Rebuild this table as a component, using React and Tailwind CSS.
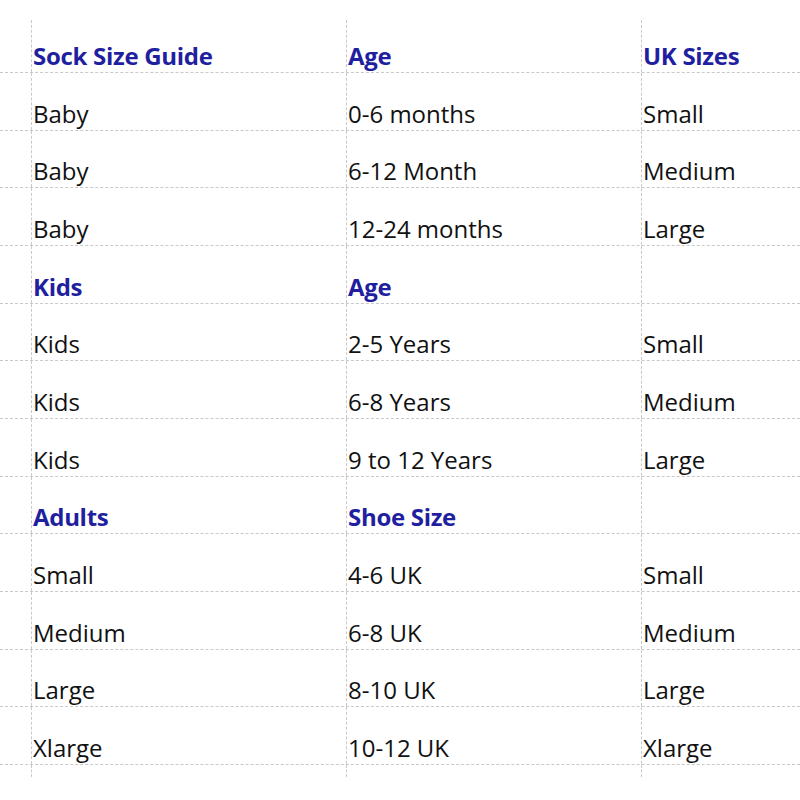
const rows = [
  { cells: ['Sock Size Guide', 'Age', 'UK Sizes'], head: true },
  { cells: ['Baby', '0-6 months', 'Small'] },
  { cells: ['Baby', '6-12 Month', 'Medium'] },
  { cells: ['Baby', '12-24 months', 'Large'] },
  { cells: ['Kids', 'Age', ''], head: true },
  { cells: ['Kids', '2-5 Years', 'Small'] },
  { cells: ['Kids', '6-8 Years', 'Medium'] },
  { cells: ['Kids', '9 to 12 Years', 'Large'] },
  { cells: ['Adults', 'Shoe Size', ''], head: true },
  { cells: ['Small', '4-6 UK', 'Small'] },
  { cells: ['Medium', '6-8 UK', 'Medium'] },
  { cells: ['Large', '8-10 UK', 'Large'] },
  { cells: ['Xlarge', '10-12 UK', 'Xlarge'] },
]

const cols = 'grid grid-cols-[31px_315px_295px_1fr]'
const vline = 'border-l border-dashed border-[#c9c9c9]'

export default function App() {
  return (
    <div className="w-[800px] h-[800px] bg-white overflow-hidden pt-[20px] font-['Open_Sans',sans-serif] text-[24px] text-[#111111]">
      {rows.map((row, i) => (
        <div
          key={i}
          className={`${cols} border-b border-dashed border-[#c9c9c9] ${i === 0 ? 'h-[53px]' : 'h-[57.67px]'}`}
        >
          <div />
          {row.cells.map((text, j) => (
            <div key={j} className={`${vline} flex items-end pl-[1px] pb-[4px]`}>
              <span
                className={`leading-none ${row.head ? 'font-bold text-[#1f1f9f] tracking-[-0.3px]' : ''}`}
              >
                {text}
              </span>
            </div>
          ))}
        </div>
      ))}
      <div className={`${cols} h-[12px]`}>
        <div />
        <div className={vline} />
        <div className={vline} />
        <div className={vline} />
      </div>
    </div>
  )
}
